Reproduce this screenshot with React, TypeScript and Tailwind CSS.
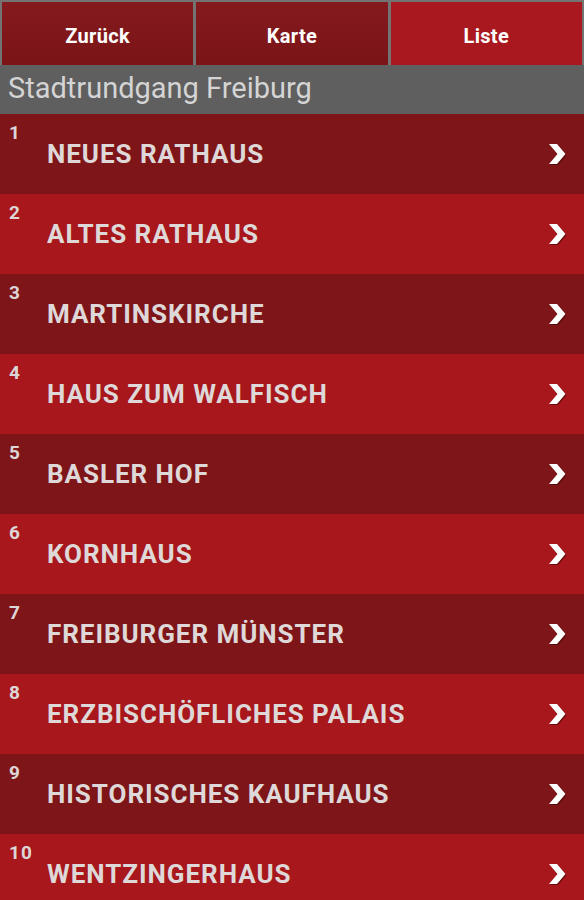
import React from "react";

const items = [
  "NEUES RATHAUS",
  "ALTES RATHAUS",
  "MARTINSKIRCHE",
  "HAUS ZUM WALFISCH",
  "BASLER HOF",
  "KORNHAUS",
  "FREIBURGER MÜNSTER",
  "ERZBISCHÖFLICHES PALAIS",
  "HISTORISCHES KAUFHAUS",
  "WENTZINGERHAUS",
];

function Chevron() {
  return (
    <svg width="22" height="26" viewBox="0 0 22 26" className="drop-shadow-[1px_1px_0_rgba(60,0,0,0.6)]">
      <path d="M3 3 L11 3 L19.5 13 L11 23 L3 23 L11.5 13 Z" fill="#ffffff" />
    </svg>
  );
}

export default function App() {
  return (
    <div
      className="w-[584px] h-[900px] overflow-hidden bg-[#5f5f5f]"
      style={{ fontFamily: "Roboto, 'Liberation Sans', sans-serif" }}
    >
      <div className="flex h-[65px] gap-[3px] bg-[#737373] px-[2px] pt-[2px]">
        <button className="flex-1 bg-gradient-to-b from-[#851a1e] to-[#7a1417] text-white font-bold text-[20px] flex items-center justify-center pt-[4px] tracking-[0.3px]">
          Zurück
        </button>
        <button className="flex-1 bg-gradient-to-b from-[#851a1e] to-[#7a1417] text-white font-bold text-[20px] flex items-center justify-center pt-[4px] tracking-[0.3px]">
          Karte
        </button>
        <button className="flex-1 bg-[#a9181e] text-white font-bold text-[20px] flex items-center justify-center pt-[4px] tracking-[0.3px]">
          Liste
        </button>
      </div>
      <div className="h-[49px] bg-[#5f5f5f] flex items-center pl-[8px] pb-[2px]">
        <span className="text-[#d4d4d4] text-[29px] leading-none">Stadtrundgang Freiburg</span>
      </div>
      <div className="flex flex-col">
        {items.map((name, i) => (
          <div
            key={name}
            className={`relative h-[80px] flex items-center ${i % 2 === 0 ? "bg-[#7e1519]" : "bg-[#a7171c]"}`}
          >
            <span className="absolute left-[9px] top-[9px] text-[#ddd6d6] font-bold text-[19px] leading-none tracking-[1px]">
              {i + 1}
            </span>
            <span className="pl-[47px] text-[#ded8d8] font-bold text-[26px] leading-none flex-1 tracking-[0.95px]">
              {name}
            </span>
            <div className="pr-[16px] flex items-center">
              <Chevron />
            </div>
          </div>
        ))}
      </div>
    </div>
  );
}
